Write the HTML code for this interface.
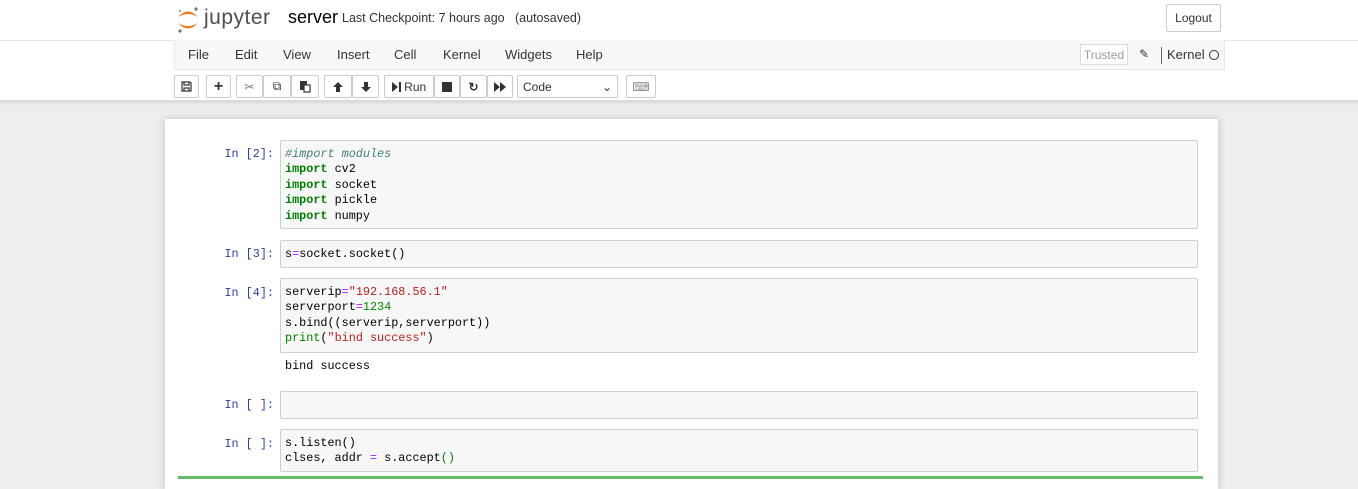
<!DOCTYPE html>
<html><head><meta charset="utf-8"><style>
*{box-sizing:border-box}
body{margin:0;width:1358px;height:479px;overflow:hidden;background:#eee;font-family:"Liberation Sans",sans-serif;position:relative}
.a{position:absolute}
#hdr{left:0;top:0;width:1358px;height:101px;background:#fff;border-bottom:1px solid #ddd;box-shadow:0 1px 4px rgba(0,0,0,.15)}
.menu{font-size:13px;color:#333;top:47px}
.btn{position:absolute;top:75px;height:23px;border:1px solid #ccc;background:#fff;border-radius:2px;font-size:12px;color:#333;display:flex;align-items:center;justify-content:center}
.nb{left:165px;top:119px;width:1053px;height:370px;background:#fff;box-shadow:0 0 8px rgba(0,0,0,.2)}
.inp{position:absolute;left:280px;width:918px;background:#f7f7f7;border:1px solid #cfcfcf;border-radius:2px;padding:6px 4px 5px;font-family:"Liberation Mono",monospace;font-size:11.8px;line-height:15.4px;color:#000;white-space:pre}
.pr{position:absolute;width:100px;left:174px;text-align:right;font-family:"Liberation Mono",monospace;font-size:11.8px;color:#303f9f}
.k{color:#008000;font-weight:bold}.c{color:#408080;font-style:italic}.o{color:#aa22ff}.s{color:#ba2121}.n{color:#080}.b{color:#008000}
</style></head><body>
<div id="hdr" class="a"></div>
<svg class="a" style="left:176px;top:5px" width="24" height="28" viewBox="0 0 24 28">
<path d="M2 12 Q12 1 22 12 Q12 6 2 12Z" fill="#f37726"/>
<path d="M2 18 Q12 29 22 18 Q12 24 2 18Z" fill="#f37726"/>
<circle cx="20" cy="4" r="1.6" fill="#767677"/><circle cx="4" cy="26" r="1.6" fill="#767677"/><circle cx="4" cy="6" r="1.1" fill="#989798"/>
</svg>
<div class="a" style="left:204px;top:6px;font-size:21px;color:#4e4e4e;letter-spacing:0.5px">jupyter</div>
<div class="a" style="left:288px;top:7px;font-size:18px;color:#000">server</div>
<div class="a" style="left:342px;top:11px;font-size:12.5px;color:#333">Last Checkpoint: 7 hours ago &nbsp; (autosaved)</div>
<div class="a" style="left:1166px;top:4px;width:55px;height:28px;border:1px solid #ccc;border-radius:2px;font-size:12px;color:#333;display:flex;align-items:center;justify-content:center">Logout</div>
<div class="a" style="left:0;top:40px;width:1358px;border-top:1px solid #e7e7e7"></div>
<div class="a" style="left:174px;top:40px;width:1051px;height:30px;background:#f8f8f8;border:1px solid #e7e7e7;border-top:none"></div>
<span class="a menu" style="left:188px">File</span><span class="a menu" style="left:235px">Edit</span><span class="a menu" style="left:283px">View</span><span class="a menu" style="left:337px">Insert</span><span class="a menu" style="left:394px">Cell</span><span class="a menu" style="left:443px">Kernel</span><span class="a menu" style="left:505px">Widgets</span><span class="a menu" style="left:576px">Help</span>
<div class="a" style="left:1080px;top:44px;width:48px;height:21px;border:1px solid #ddd;background:#fff;font-size:12px;color:#999;display:flex;align-items:center;justify-content:center">Trusted</div>
<div class="a" style="left:1139px;top:47px;font-size:12px;color:#333">✎</div>
<div class="a" style="left:1161px;top:47px;height:17px;border-left:1px solid #666"></div>
<span class="a menu" style="left:1167px">Kernel</span>
<div class="a" style="left:1209px;top:50px;width:10px;height:10px;border:1.5px solid #333;border-radius:50%"></div>
<div class="btn" style="left:174px;width:25px"><svg width="11" height="11" viewBox="0 0 11 11"><path d="M1 1H9L10 2V10H1Z M3 1V4H8V1 M3 7H8V10H3Z" fill="none" stroke="#333" stroke-width="1.2"/></svg></div>
<div class="btn" style="left:206px;width:25px;font-weight:bold;font-size:16px">+</div>
<div class="btn" style="left:236px;width:27px;color:#777">✂</div>
<div class="btn" style="left:263px;width:28px">⧉</div>
<div class="btn" style="left:291px;width:28px"><svg width="12" height="13" viewBox="0 0 12 13"><rect x="1" y="1" width="7" height="9" fill="#333"/><rect x="5" y="5" width="6" height="7" fill="#fff" stroke="#333" stroke-width="1.2"/></svg></div>
<div class="btn" style="left:324px;width:28px"><svg width="12" height="12" viewBox="0 0 12 12"><path d="M6 1L11 6H8V11H4V6H1Z" fill="#333"/></svg></div>
<div class="btn" style="left:352px;width:27px"><svg width="12" height="12" viewBox="0 0 12 12"><path d="M6 11L11 6H8V1H4V6H1Z" fill="#333"/></svg></div>
<div class="btn" style="left:384px;width:50px"><svg width="9" height="10" viewBox="0 0 9 10"><path d="M0 0L6 5L0 10Z M7 0H9V10H7Z" fill="#333"/></svg>&nbsp;Run</div>
<div class="btn" style="left:434px;width:26px"><div style="width:10px;height:10px;background:#333"></div></div>
<div class="btn" style="left:460px;width:27px;font-weight:bold">↻</div>
<div class="btn" style="left:487px;width:26px"><svg width="12" height="10" viewBox="0 0 12 10"><path d="M0 0L6 5L0 10Z M6 0L12 5L6 10Z" fill="#333"/></svg></div>
<div class="btn" style="left:517px;width:101px;justify-content:space-between;padding:0 5px">Code<span>⌄</span></div>
<div class="btn" style="left:626px;width:30px;color:#888">⌨</div>
<div class="a nb"></div>
<div class="pr" style="top:147px">In [2]:</div>
<div class="inp" style="top:140px;height:89px"><span class="c">#import modules</span>
<span class="k">import</span> cv2
<span class="k">import</span> socket
<span class="k">import</span> pickle
<span class="k">import</span> numpy</div>
<div class="pr" style="top:247px">In [3]:</div>
<div class="inp" style="top:240px;height:28px">s<span class="o">=</span>socket.socket()</div>
<div class="pr" style="top:286px">In [4]:</div>
<div class="inp" style="top:278px;height:75px">serverip<span class="o">=</span><span class="s">"192.168.56.1"</span>
serverport<span class="o">=</span><span class="n">1234</span>
s.bind((serverip,serverport))
<span class="b">print</span>(<span class="s">"bind success"</span>)</div>
<div class="a" style="left:285px;top:359px;font-family:'Liberation Mono',monospace;font-size:11.8px">bind success</div>
<div class="pr" style="top:398px">In [ ]:</div>
<div class="inp" style="top:391px;height:28px"></div>
<div class="pr" style="top:437px">In [ ]:</div>
<div class="inp" style="top:429px;height:43px">s.listen()
clses, addr <span class="o">=</span> s.accept<span class="b">()</span></div>
<div class="a" style="left:178px;top:476px;width:1025px;height:3px;background:#66bb6a"></div>
</body></html>
